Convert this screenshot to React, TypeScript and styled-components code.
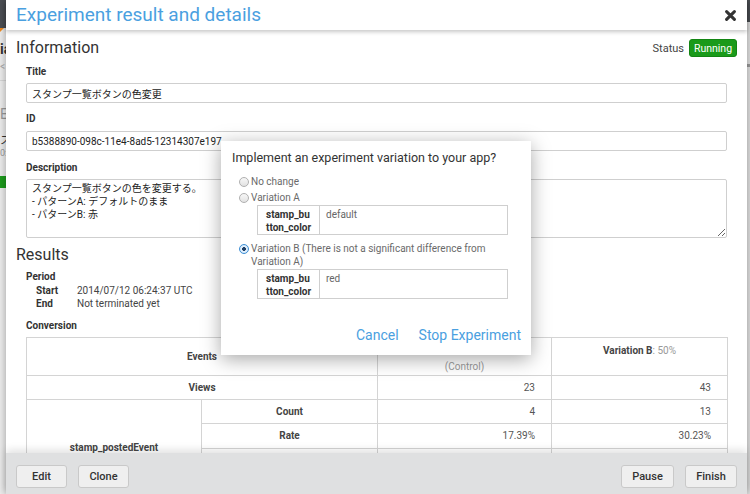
import * as React from "react";
import styled, { createGlobalStyle } from "styled-components";

const font = `Roboto, "Noto Sans CJK JP", "DejaVu Sans", sans-serif`;
const blue = "#4aa0e0";
const line = "#d4d4d4";

const Global = createGlobalStyle`
  html, body {
    margin: 0;
    padding: 0;
    background: #e6e6e6;
  }
  body {
    font-family: ${font};
    color: #333;
  }
  * {
    box-sizing: border-box;
  }
`;

const Root = styled.div`
  position: relative;
  display: flex;
  width: 750px;
  height: 494px;
  overflow: hidden;
  background: #e8e8e8;
`;

/* what is left visible of the page behind the modal */
const LeftEdge = styled.div`
  width: 6px;
  flex-shrink: 0;
  display: flex;
  flex-direction: column;
  overflow: hidden;
  background: #ececec;
`;

const EdgeTop = styled.div<{ h: number }>`
  height: ${(p) => p.h}px;
  flex-shrink: 0;
  background: #4b4e53;
`;

const Notch = styled.div`
  width: 0;
  height: 0;
  border-left: 4px solid #f0891d;
  border-bottom: 4px solid transparent;
`;

const EdgeText = styled.div<{ mt: number; size: number; tone: string; bold?: boolean }>`
  margin-top: ${(p) => p.mt}px;
  font-size: ${(p) => p.size}px;
  line-height: 1;
  color: ${(p) => p.tone};
  font-weight: ${(p) => (p.bold ? 700 : 400)};
  white-space: nowrap;
`;

const EdgeRule = styled.div<{ mt: number }>`
  margin-top: ${(p) => p.mt}px;
  height: 1px;
  background: #d6d6d6;
`;

const EdgeBadge = styled.div`
  margin-top: 18px;
  width: 8px;
  height: 12px;
  background: #1d9b1d;
`;

const RightEdge = styled.div`
  width: 3px;
  flex-shrink: 0;
  display: flex;
  flex-direction: column;
  background: #e2e2e2;
`;

const EdgeMark = styled.div`
  margin-top: 42px;
  height: 3px;
  background: #9a9a9a;
`;

const Modal = styled.div`
  width: 741px;
  flex-shrink: 0;
  display: flex;
  flex-direction: column;
  background: #fff;
  box-shadow: 0 0 8px rgba(0, 0, 0, 0.35);
  position: relative;
  z-index: 1;
`;

const TitleBar = styled.div`
  position: relative;
  z-index: 2;
  height: 30px;
  flex-shrink: 0;
  display: flex;
  align-items: center;
  justify-content: space-between;
  padding: 0 10px;
  background: #fff;
  box-shadow: 0 2px 4px rgba(0, 0, 0, 0.22);
`;

const Title = styled.h1`
  margin: 0;
  font-size: 19px;
  font-weight: 400;
  color: ${blue};
  line-height: 30px;
`;

const Close = styled.button`
  border: none;
  background: none;
  padding: 0;
  margin-right: 1px;
  display: flex;
  color: #333;
`;

const Body = styled.div`
  flex: 1;
  overflow: hidden;
  padding: 8px 10px 0;
`;

const HeadRow = styled.div<{ mt?: number }>`
  display: flex;
  align-items: center;
  justify-content: space-between;
  height: 20px;
  margin-top: ${(p) => p.mt || 0}px;
`;

const SectionTitle = styled.h2`
  margin: 0;
  font-size: 16px;
  font-weight: 400;
  color: #333;
  line-height: 20px;
`;

const Status = styled.div`
  display: flex;
  align-items: center;
  gap: 5px;
  font-size: 11px;
  color: #444;
`;

const Badge = styled.span`
  display: inline-flex;
  align-items: center;
  justify-content: center;
  width: 48px;
  height: 18px;
  border-radius: 3px;
  background: #1a9a1a;
  border: 1px solid #138513;
  color: #fff;
  font-size: 10.5px;
`;

const Section = styled.div`
  padding: 0 10px;
`;

const Label = styled.div<{ mt: number; mb?: number }>`
  margin-top: ${(p) => p.mt}px;
  margin-bottom: ${(p) => p.mb || 0}px;
  font-size: 10px;
  font-weight: 700;
  line-height: 14px;
  color: #333;
`;

const Input = styled.input`
  display: block;
  width: 100%;
  height: 20px;
  margin: 0;
  padding: 0 5px;
  border: 1px solid #cfcfcf;
  border-radius: 2px;
  font-family: ${font};
  font-size: 10px;
  color: #222;
  outline: none;
`;

const TextArea = styled.textarea`
  display: block;
  width: 100%;
  height: 59px;
  margin: 0;
  padding: 2px 5px;
  border: 1px solid #cfcfcf;
  border-radius: 2px;
  font-family: ${font};
  font-size: 10px;
  line-height: 13px;
  color: #222;
  outline: none;
`;

const Period = styled.div`
  display: grid;
  grid-template-columns: 41px 1fr;
  padding-left: 10px;
  font-size: 10px;
  line-height: 13px;
  color: #444;
`;

const Key = styled.span`
  font-weight: 700;
  color: #333;
`;

const Table = styled.table`
  width: 100%;
  border-collapse: collapse;
  table-layout: fixed;
  font-size: 10px;
  color: #555;
`;

const Cell = styled.td<{ h?: number; align?: string; valign?: string; bold?: boolean }>`
  border: 1px solid ${line};
  height: ${(p) => p.h || 24}px;
  padding: 0 16px;
  text-align: ${(p) => p.align || "center"};
  vertical-align: ${(p) => p.valign || "middle"};
  font-weight: ${(p) => (p.bold ? 700 : 400)};
  color: ${(p) => (p.bold ? "#444" : "#555")};
  line-height: 16px;
`;

const HeadCell = styled(Cell)`
  padding-top: 5px;
`;

const Muted = styled.span`
  color: #999;
  font-weight: 400;
`;

const Footer = styled.div`
  position: relative;
  z-index: 2;
  height: 41px;
  flex-shrink: 0;
  display: flex;
  align-items: flex-start;
  justify-content: space-between;
  padding: 12px 10px 0;
  background: #dfe0e1;
  box-shadow: 0 -3px 8px rgba(0, 0, 0, 0.12);
`;

const ButtonGroup = styled.div`
  display: flex;
  gap: 11px;
`;

const Button = styled.button<{ w: number }>`
  width: ${(p) => p.w}px;
  height: 23px;
  padding: 0;
  border: 1px solid #c9c9c9;
  border-radius: 3px;
  background: #efefef;
  font-family: ${font};
  font-size: 11px;
  font-weight: 500;
  color: #333;
`;

/* confirmation popup over the modal */
const Dialog = styled.div`
  position: absolute;
  left: 221px;
  top: 141px;
  z-index: 5;
  width: 310px;
  height: 214px;
  display: flex;
  flex-direction: column;
  padding: 9px 10px 11px 11px;
  background: #fff;
  box-shadow: 0 4px 18px rgba(0, 0, 0, 0.35);
`;

const DialogTitle = styled.div`
  font-size: 12.5px;
  line-height: 16px;
  color: #333;
`;

const Options = styled.div`
  display: flex;
  flex-direction: column;
  margin-top: 9px;
  padding-left: 7px;
`;

const Option = styled.label<{ mt?: number }>`
  display: flex;
  align-items: flex-start;
  gap: 2px;
  margin-top: ${(p) => p.mt || 0}px;
  font-size: 10px;
  line-height: 13px;
  color: #6a6a6a;
`;

const Radio = styled.span<{ checked?: boolean }>`
  width: 10px;
  height: 10px;
  margin-top: 1.5px;
  flex-shrink: 0;
  border-radius: 50%;
  border: 1px solid ${(p) => (p.checked ? "#3d8fd6" : "#b0b0b0")};
  background: ${(p) =>
    p.checked
      ? "radial-gradient(circle, #1f3f66 0 1.6px, #e8f3fd 2.2px, #bcdcf7 100%)"
      : "linear-gradient(#f7f7f7, #e2e2e2)"};
`;

const VarTable = styled.div<{ mt: number }>`
  display: grid;
  grid-template-columns: 62px 1fr;
  width: 251px;
  height: 30px;
  margin: ${(p) => p.mt}px 0 0 18px;
  border: 1px solid #cfcfcf;
  font-size: 10px;
  line-height: 13px;
`;

const VarKey = styled.div`
  padding: 2px 0 0 8px;
  border-right: 1px solid #cfcfcf;
  font-weight: 700;
  color: #333;
  white-space: nowrap;
`;

const VarValue = styled.div`
  padding: 2px 0 0 6px;
  color: #666;
`;

const DialogActions = styled.div`
  margin-top: auto;
  display: flex;
  justify-content: flex-end;
  gap: 20px;
`;

const LinkButton = styled.button`
  border: none;
  background: none;
  padding: 0;
  font-family: ${font};
  font-size: 14px;
  line-height: 18px;
  color: ${blue};
`;

const XIcon = () => (
  <svg width="11" height="11" viewBox="0 0 11 11">
    <path
      d="M1.6 1.6 L9.4 9.4 M9.4 1.6 L1.6 9.4"
      stroke="currentColor"
      strokeWidth="3"
      strokeLinecap="round"
    />
  </svg>
);

const description =
  "スタンプ一覧ボタンの色を変更する。\n- パターンA: デフォルトのまま\n- パターンB: 赤";

const VarKeyText = () => (
  <VarKey>
    stamp_bu
    <br />
    tton_color
  </VarKey>
);

export default function App() {
  return (
    <Root>
      <Global />
      <LeftEdge>
        <EdgeTop h={28} />
        <Notch />
        <EdgeText mt={10} size={14} tone="#333" bold>
          ia
        </EdgeText>
        <EdgeText mt={6} size={10} tone="#aaa">
          &lt;
        </EdgeText>
        <EdgeRule mt={8} />
        <EdgeText mt={26} size={14} tone="#999">
          E
        </EdgeText>
        <EdgeText mt={14} size={11} tone="#333">
          ス
        </EdgeText>
        <EdgeText mt={3} size={9} tone="#999">
          0:
        </EdgeText>
        <EdgeBadge />
      </LeftEdge>

      <Modal>
        <TitleBar>
          <Title>Experiment result and details</Title>
          <Close aria-label="close">
            <XIcon />
          </Close>
        </TitleBar>

        <Body>
          <HeadRow>
            <SectionTitle>Information</SectionTitle>
            <Status>
              Status <Badge>Running</Badge>
            </Status>
          </HeadRow>
          <Section>
            <Label mt={7} mb={4}>
              Title
            </Label>
            <Input readOnly value="スタンプ一覧ボタンの色変更" />
            <Label mt={9} mb={5}>
              ID
            </Label>
            <Input readOnly value="b5388890-098c-11e4-8ad5-12314307e197" />
            <Label mt={10} mb={4}>
              Description
            </Label>
            <TextArea readOnly value={description} />
          </Section>

          <HeadRow mt={7}>
            <SectionTitle>Results</SectionTitle>
          </HeadRow>
          <Section>
            <Label mt={5}>Period</Label>
            <Period>
              <Key>Start</Key>
              <span>2014/07/12 06:24:37 UTC</span>
              <Key>End</Key>
              <span>Not terminated yet</span>
            </Period>
            <Label mt={9} mb={4}>
              Conversion
            </Label>
            <Table>
              <colgroup>
                <col style={{ width: 175 }} />
                <col style={{ width: 176 }} />
                <col style={{ width: 174 }} />
                <col style={{ width: 176 }} />
              </colgroup>
              <tbody>
                <tr>
                  <Cell colSpan={2} h={37} bold>
                    Events
                  </Cell>
                  <HeadCell h={37} valign="top" bold>
                    Variation A<Muted>: 50%</Muted>
                    <br />
                    <Muted>(Control)</Muted>
                  </HeadCell>
                  <HeadCell h={37} valign="top" bold>
                    Variation B<Muted>: 50%</Muted>
                  </HeadCell>
                </tr>
                <tr>
                  <Cell colSpan={2} bold>
                    Views
                  </Cell>
                  <Cell align="right">23</Cell>
                  <Cell align="right">43</Cell>
                </tr>
                <tr>
                  <Cell rowSpan={4} bold>
                    stamp_postedEvent
                  </Cell>
                  <Cell bold>Count</Cell>
                  <Cell align="right">4</Cell>
                  <Cell align="right">13</Cell>
                </tr>
                <tr>
                  <Cell h={25} bold>
                    Rate
                  </Cell>
                  <Cell h={25} align="right">
                    17.39%
                  </Cell>
                  <Cell h={25} align="right">
                    30.23%
                  </Cell>
                </tr>
                <tr>
                  <Cell bold>Improvement</Cell>
                  <Cell align="right">-</Cell>
                  <Cell align="right">+73.81%</Cell>
                </tr>
                <tr>
                  <Cell bold>Chance to beat</Cell>
                  <Cell align="right">-</Cell>
                  <Cell align="right">89.01%</Cell>
                </tr>
              </tbody>
            </Table>
          </Section>
        </Body>

        <Footer>
          <ButtonGroup>
            <Button w={51}>Edit</Button>
            <Button w={51}>Clone</Button>
          </ButtonGroup>
          <ButtonGroup>
            <Button w={53}>Pause</Button>
            <Button w={52}>Finish</Button>
          </ButtonGroup>
        </Footer>
      </Modal>

      <RightEdge>
        <EdgeTop h={22} />
        <EdgeMark />
      </RightEdge>

      <Dialog>
        <DialogTitle>Implement an experiment variation to your app?</DialogTitle>
        <Options>
          <Option>
            <Radio />
            No change
          </Option>
          <Option mt={3}>
            <Radio />
            Variation A
          </Option>
          <VarTable mt={1}>
            <VarKeyText />
            <VarValue>default</VarValue>
          </VarTable>
          <Option mt={7}>
            <Radio checked />
            <span>
              Variation B (There is not a significant difference from Variation A)
            </span>
          </Option>
          <VarTable mt={1}>
            <VarKeyText />
            <VarValue>red</VarValue>
          </VarTable>
        </Options>
        <DialogActions>
          <LinkButton>Cancel</LinkButton>
          <LinkButton>Stop Experiment</LinkButton>
        </DialogActions>
      </Dialog>
    </Root>
  );
}
